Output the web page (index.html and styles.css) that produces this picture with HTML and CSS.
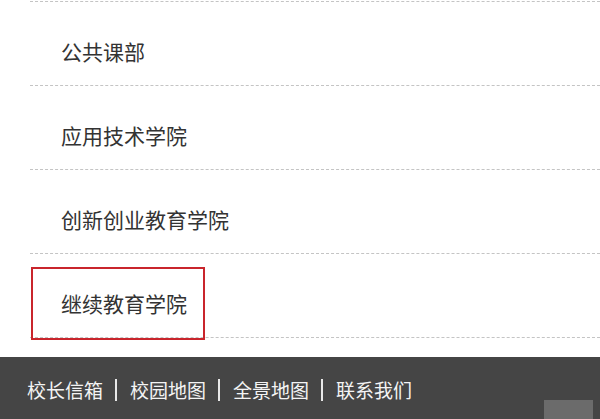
FILE: index.html
```html
<!DOCTYPE html>
<html>
  <head>
    <meta charset="utf-8" />
    <meta name="viewport" content="width=device-width, initial-scale=1.0" />
    <title>院系导航</title>
    <link rel="stylesheet" href="styles.css">
  </head>
  <body>
    <div class="page">
      <ul class="dept-list">
        <li class="dept-item"><a href="#">公共课部</a></li>
        <li class="dept-item"><a href="#">应用技术学院</a></li>
        <li class="dept-item"><a href="#">创新创业教育学院</a></li>
        <li class="dept-item active">
          <a href="#">继续教育学院</a>
          <span class="highlight"></span>
        </li>
      </ul>

      <div class="footer">
        <a href="#">校长信箱</a>
        <span class="sep"></span>
        <a href="#">校园地图</a>
        <span class="sep"></span>
        <a href="#">全景地图</a>
        <span class="sep"></span>
        <a href="#">联系我们</a>
        <span class="to-top"></span>
      </div>
    </div>
  </body>
</html>
```

FILE: styles.css
```css
html,
body {
  margin: 0;
  padding: 0;
  background: #fff;
}

body {
  font-family: "Noto Sans CJK SC", "Noto Sans", sans-serif;
  width: 600px;
  height: 419px;
  overflow: hidden;
}

.page {
  display: flex;
  flex-direction: column;
  height: 419px;
  position: relative;
}

/* 院系列表 */
.dept-list {
  list-style: none;
  margin: 0 0 0 30px;
  padding: 0;
  border-top: 1px dashed #c4c4c4;
  margin-top: 1px;
}

.dept-item {
  position: relative;
  height: 83px;
  border-bottom: 1px dashed #c4c4c4;
  box-sizing: content-box;
}

.dept-item a {
  display: block;
  padding: 37px 0 0 31px;
  font-size: 21px;
  line-height: 24px;
  color: #333;
  text-decoration: none;
}

.dept-item.active .highlight {
  position: absolute;
  left: 1px;
  top: 13px;
  width: 170px;
  height: 69px;
  border: 2px solid #c9252c;
}

/* 底部链接 */
.footer {
  margin-top: auto;
  height: 62px;
  background: #454545;
  display: flex;
  align-items: center;
  padding: 4px 0 0 27px;
  box-sizing: border-box;
  position: relative;
}

.footer a {
  color: #f4f4f4;
  font-size: 19px;
  line-height: 24px;
  text-decoration: none;
}

.footer .sep {
  width: 2px;
  height: 22px;
  background: #e8e8e8;
  margin: 0 13px 0 12px;
}

.to-top {
  position: absolute;
  right: 7px;
  bottom: 0;
  width: 49px;
  height: 19px;
  background: #6b6b6b;
}
```
